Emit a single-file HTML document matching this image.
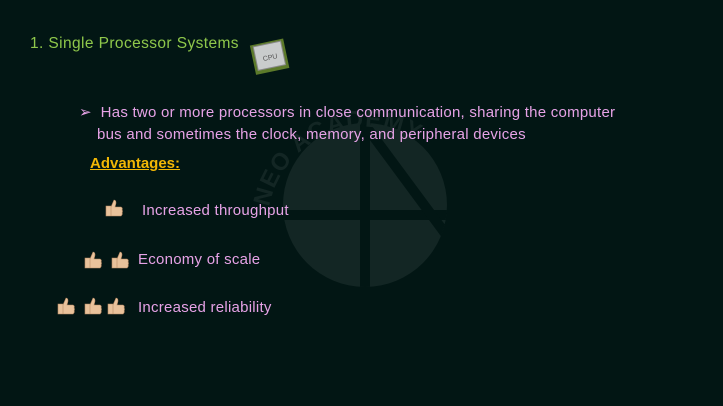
<!DOCTYPE html>
<html><head><meta charset="utf-8"><style>
html,body{margin:0;padding:0}
body{width:723px;height:406px;background:#021614;position:relative;overflow:hidden;font-family:"Comic Sans MS","Liberation Sans",sans-serif}
.t{position:absolute;white-space:nowrap}
.p{color:#e6a2e6;font-size:15px;letter-spacing:0.25px}
</style></head><body>
<svg style="position:absolute;left:0;top:0" width="723" height="406">
<defs><clipPath id="c"><circle cx="365" cy="205" r="82"/></clipPath>
<path id="arc" d="M268 215 A98 98 0 0 1 463 215"/></defs>
<g clip-path="url(#c)">
<rect x="280" y="120" width="170" height="170" fill="#132624"/>
<path d="M365 120 V290" stroke="#021614" stroke-width="10"/>
<path d="M280 215 H450" stroke="#021614" stroke-width="10"/>
<path d="M365 125 L450 240" stroke="#021614" stroke-width="10"/>
</g>
<text fill="#132624" font-size="24" font-family="Liberation Sans" font-weight="bold" letter-spacing="1"><textPath href="#arc" startOffset="8">NEO ACADEMY</textPath></text>
<g transform="translate(250,38) rotate(-12 18 16)">
<rect x="2" y="4" width="34" height="30" fill="#5c7a2a"/>
<rect x="5" y="6" width="28" height="24" fill="#c9cccc" stroke="#888" />
<text x="12" y="22" font-size="7" fill="#555">CPU</text>
</g>
<defs><g id="th"><path d="M2 8 h5 v10 h-5z M7 9 l3-7 q2 0 2 3 l-1 4 h6 q2 1 1 3 q1 1 0 3 q1 1-1 3 h-10z" fill="#e9c29b" stroke="#b88a64" stroke-width="0.6"/></g></defs>
<use href="#th" x="104" y="198"/>
<use href="#th" x="83" y="250"/><use href="#th" x="110" y="250"/>
<use href="#th" x="56" y="296"/><use href="#th" x="83" y="296"/><use href="#th" x="106" y="296"/>
</svg>
<div class="t" style="left:30px;top:35px;color:#8fc84b;font-size:15.5px;letter-spacing:0.4px">1. Single Processor Systems</div>
<div class="t p" style="left:79px;top:103px">➢&nbsp; Has two or more processors in close communication, sharing the computer</div>
<div class="t p" style="left:97px;top:126px">bus and sometimes the clock, memory, and peripheral devices</div>
<div class="t" style="left:90px;top:155px;color:#f2b705;font-size:15px;font-weight:bold;text-decoration:underline">Advantages:</div>
<div class="t p" style="left:142px;top:202px">Increased throughput</div>
<div class="t p" style="left:138px;top:251px">Economy of scale</div>
<div class="t p" style="left:138px;top:299px">Increased reliability</div>
</body></html>
